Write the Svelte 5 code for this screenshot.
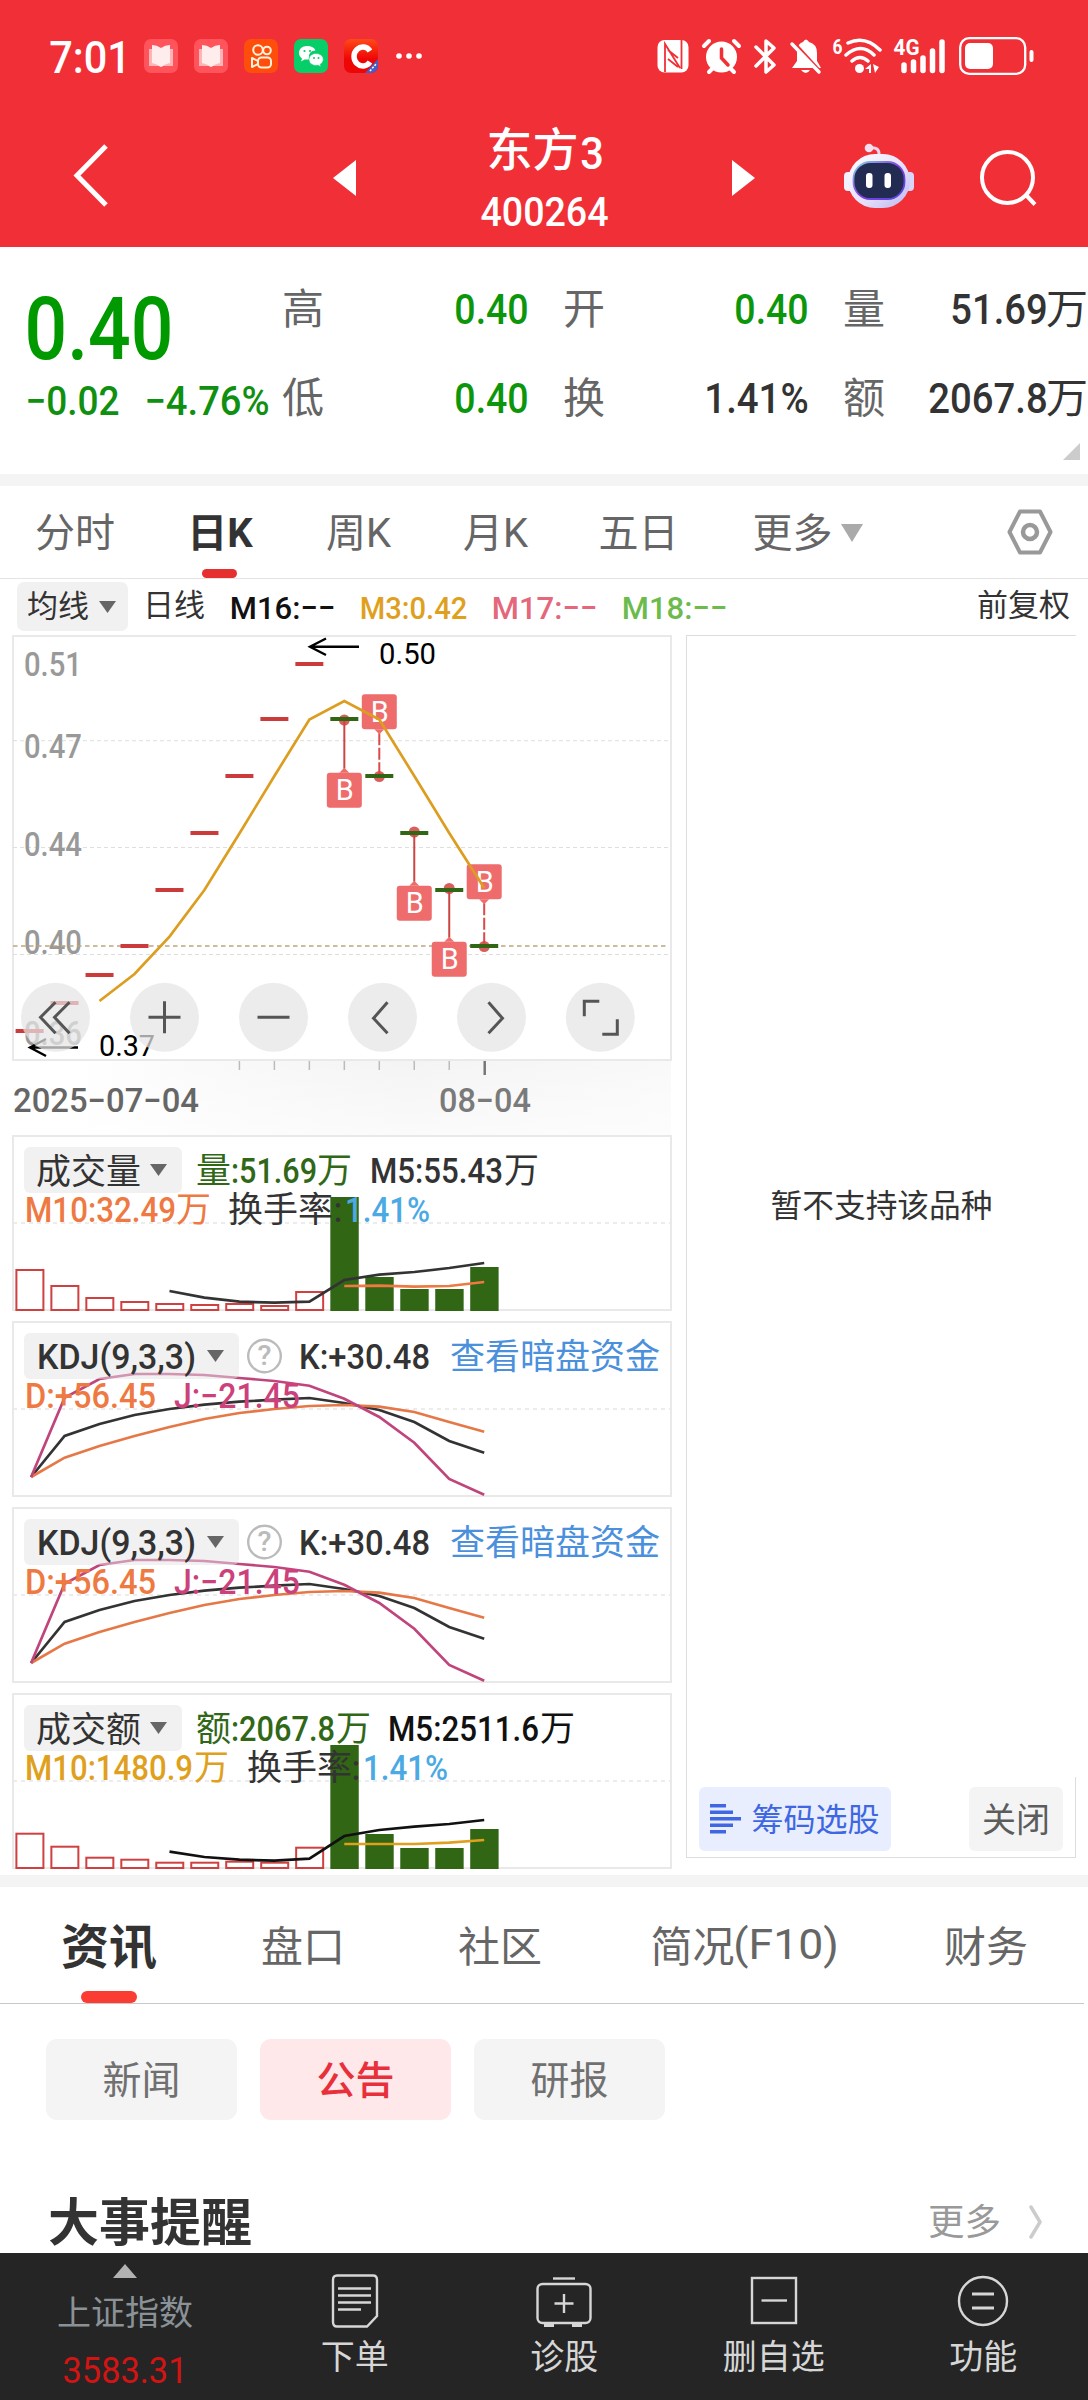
<script lang="ts">
	type Label = [x: number, y: number, text: string, width: number, color: string];

	const quotes = [
		[
			{ name: '高', value: '0.40', width: 71, down: true },
			{ name: '低', value: '0.40', width: 71, down: true }
		],
		[
			{ name: '开', value: '0.40', width: 71, down: true },
			{ name: '换', value: '1.41%', width: 101 }
		],
		[
			{ name: '量', value: '51.69', width: 94, unit: '万' },
			{ name: '额', value: '2067.8', width: 116, unit: '万' }
		]
	];

	const averages = [
		{ text: 'M16:--', width: 103, color: '#111' },
		{ text: 'M3:0.42', width: 105, color: '#dfa01e' },
		{ text: 'M17:--', width: 103, color: '#e4677b' },
		{ text: 'M18:--', width: 103, color: '#6cbb4c' }
	];

	// x of the n-th trading day
	const dayX = (i: number) => 29.6 + i * 34.97;
	const line = (ys: number[], from = 0) =>
		ys.map((y, i) => `${(dayX(i + from) + (i + from === 0 ? 1.5 : 0)).toFixed(1)},${y}`).join(' ');

	const prices = [1031, 1003, 975, 946, 890, 833, 776, 719, 664, 719, 776, 833, 890, 946];
	const ma3 = [1001, 974, 936.6, 890, 833.5, 776, 719.5, 701, 719.5, 776, 833, 888];

	const axis: [string, number][] = [
		['0.51', 676],
		['0.47', 757.6],
		['0.44', 855.7],
		['0.40', 954.3],
		['0.36', 1044.7]
	];

	// day, top of the badge, y of the price dot
	const marks = [
		{ day: 9, top: 772.7, dot: 720 },
		{ day: 10, top: 694.3, dot: 776.5 },
		{ day: 11, top: 885.7, dot: 832 },
		{ day: 12, top: 941.7, dot: 888.5 },
		{ day: 13, top: 864.3, dot: 946.5 }
	];

	const tools = [
		{ x: 55.5, d: 'M0 -15 L-15 0 L0 16 M14 -15 L-1 0 L14 16' },
		{ x: 164.5, d: 'M-16 0 H16 M0 -16 V16' },
		{ x: 273.5, d: 'M-16 0 H16' },
		{ x: 382.5, d: 'M5 -15 L-9 1 L5 16' },
		{ x: 491.5, d: 'M-3 -15 L11 1 L-3 16' },
		{ x: 600.3, d: 'M-16 -1 V-16 H-1 M17 2 V17 H2' }
	];

	const volume = {
		title: '成交量',
		bars: [135, 151, 163, 167, 169, 170, 169, 171, 157, 62, 142, 154, 154, 132],
		m5: [156, 162.7, 166.7, 167.7, 166.7, 145, 139.7, 137, 133, 128],
		m10: [151, 150.7, 151.7, 151, 147],
		m5Color: '#333',
		m10Color: '#ee7942',
		labels: [
			[196, 48, '量', 0, '#306818'],
			[232, 48, ':51.69', 84, '#306818'],
			[317, 48, '万', 0, '#306818'],
			[371, 48, 'M5:55.43', 131, '#333'],
			[504, 48, '万', 0, '#333'],
			[26, 86.7, 'M10:32.49', 149, '#ee7942'],
			[176, 86.7, '万', 0, '#ee7942'],
			[228, 86.7, '换手率', 0, '#333'],
			[335, 86.7, ':', 6, '#333'],
			[346, 86.7, '1.41%', 83, '#4ba9e4']
		] as Label[]
	};

	const turnover = {
		title: '成交额',
		bars: [140.7, 153.7, 164.7, 166.7, 169.7, 169.7, 168.7, 169.7, 154.7, 52, 141, 155, 155, 136],
		m5: [158.7, 164, 166.7, 167.7, 165.7, 143, 137, 133.7, 131, 127],
		m10: [151, 151, 151, 149.7, 147],
		m5Color: '#111',
		m10Color: '#dfa01e',
		labels: [
			[196, 48, '额', 0, '#306818'],
			[232, 48, ':2067.8', 102, '#306818'],
			[336, 48, '万', 0, '#306818'],
			[389, 48, 'M5:2511.6', 149, '#111'],
			[540, 48, '万', 0, '#111'],
			[26, 86.7, 'M10:1480.9', 166, '#dfa01e'],
			[194, 86.7, '万', 0, '#dfa01e'],
			[247, 86.7, '换手率', 0, '#333'],
			[353, 86.7, ':', 6, '#333'],
			[364, 86.7, '1.41%', 83, '#4ba9e4']
		] as Label[]
	};

	const kdj = {
		k: [156, 115, 103, 94, 88, 83.7, 80.7, 78.7, 77, 82, 89, 101, 120, 131.7],
		d: [156, 136.7, 125, 115, 106, 98, 92, 88, 85, 84, 85.7, 91, 101, 110.7],
		j: [156, 76.7, 58, 53, 53, 54, 57, 60, 64.7, 77.7, 96, 121.7, 158, 173.7]
	};
</script>

<!-- condensed figures; the box is centred on the cap height -->
{#snippet num(text: string, width: number, size: number, weight = 500)}
	<svg class="num" {width} height={size}>
		<text
			x={-size * 0.04}
			y={size * 0.86}
			font-size={size}
			font-weight={weight}
			textLength={width + size * 0.08}
			lengthAdjust="spacingAndGlyphs">{text}</text
		>
	</svg>
{/snippet}

{#snippet label(x: number, y: number, text: string, width: number, fill: string, size = 35, weight = 500)}
	{#if width}
		<text
			x={x - 1}
			{y}
			{fill}
			font-size={size}
			font-weight={weight}
			textLength={width + 2}
			lengthAdjust="spacingAndGlyphs">{text}</text
		>
	{:else}
		<text {x} {y} {fill} font-size={size}>{text}</text>
	{/if}
{/snippet}

{#snippet frame()}
	<rect x="13" y="1" width="658" height="174" fill="none" stroke="#e9e9e9" stroke-width="2" />
	<path d="M13 88 H671" stroke="#e6e6e6" stroke-width="1.5" stroke-dasharray="4 4" />
{/snippet}

{#snippet bars(panel: typeof volume)}
	<svg class="panel" viewBox="0 0 674 186">
		{@render frame()}
		{#each panel.bars as top, i}
			{#if i < 9}
				<rect x={dayX(i) - 13.2} y={top} width="27" height={175 - top} fill="#fff" stroke="#cf4040" stroke-width="2" />
			{:else}
				<rect x={dayX(i) - 14} y={top} width="28.4" height={176 - top} fill="#306614" />
			{/if}
		{/each}
		<polyline points={line(panel.m5, 4)} stroke={panel.m5Color} />
		<polyline points={line(panel.m10, 9)} stroke={panel.m10Color} />
		<rect class="select" x="24" y="12" width="158" height="46" rx="6" />
		{@render label(36, 49, panel.title, 0, '#333')}
		<path d="M150 29 H167 L158.5 41 Z" fill="#666" />
		{#each panel.labels as [x, y, text, width, color]}
			{@render label(x, y, text, width, color)}
		{/each}
	</svg>
{/snippet}

{#snippet kdjPanel()}
	<svg class="panel" viewBox="0 0 674 186">
		{@render frame()}
		<polyline points={line(kdj.k)} stroke="#333" />
		<polyline points={line(kdj.d)} stroke="#e57846" />
		<polyline points={line(kdj.j)} stroke="#c0457c" />
		<rect class="select" x="24" y="12" width="215" height="46" rx="6" />
		{@render label(38, 48, 'KDJ(9,3,3)', 157, '#333')}
		<path d="M207 29 H224 L215.5 41 Z" fill="#666" />
		<circle cx="264.5" cy="35" r="16.3" fill="none" stroke="#bbb" stroke-width="2.4" />
		{@render label(258.5, 44, '?', 12, '#bbb', 27)}
		{@render label(300, 48, 'K:+30.48', 129, '#333')}
		{@render label(450, 48, '查看暗盘资金', 0, '#4a90dc')}
		{@render label(26, 86.7, 'D:+56.45', 129, '#ee7942')}
		{@render label(175, 86.7, 'J:−21.45', 124, '#cc417c')}
	</svg>
{/snippet}

<div class="screen">
	<header>
		<div class="status">
			<span class="time">{@render num('7:01', 78, 45, 500)}</span>
			<div class="apps">
				{#each [0, 1] as _}
					<svg viewBox="0 0 34 34" class="book">
						<path d="M5 10 h24 v17 H19 l-2 1 -2-1 H5z" fill="#ffb4b6" />
						<path d="M8 6 q5 0 9 3 q4-3 9-3 v18 q-5 1-9 4 q-4-3-9-4z" fill="#ffecec" />
					</svg>
				{/each}
				<svg viewBox="0 0 34 34" style:background="#ff4d0c">
					<g fill="none" stroke="#fff2d8" stroke-width="2">
						<circle cx="14" cy="11" r="4.8" /><circle cx="23" cy="11.5" r="3.8" />
						<rect x="14" y="18.5" width="13" height="10" rx="3.5" />
						<path d="M14 22 l-6-3 v9 l6-3" stroke-linejoin="round" />
					</g>
				</svg>
				<svg viewBox="0 0 34 34" style:background="#07ce68">
					<path d="M13 7 c-5 0-8 3-8 7 c0 2 1 4 3 5.5 l-1 3 3.5-2 h5 c-2-6 2-9 6-9 c-1-3-4-4.5-8.5-4.5z" fill="#fff" />
					<path d="M22 14.5 c-4 0-7 2.5-7 6 s3 6 7 6 l2-.3 3 1.5-.7-2.5 c2-1 3-3 3-4.7 c0-3.5-3-6-7.3-6z" fill="#fff" stroke="#07ce68" stroke-width=".6" />
					<g fill="#07ce68"><circle cx="10.5" cy="12" r="1.1" /><circle cx="16" cy="12" r="1.1" /><circle cx="20" cy="19" r="1" /><circle cx="24.5" cy="19" r="1" /></g>
				</svg>
				<svg viewBox="0 0 34 34" class="cnews">
					<path d="M34 20 V34 H21z" fill="#4260c8" />
					<path d="M26 12 a8.8 9.5 0 1 0 0 11" fill="none" stroke="#fff" stroke-width="5.5" />
					<path d="M26 32 l6-7" stroke="#fff" stroke-width="1.5" stroke-dasharray="2 1.5" />
				</svg>
			</div>
			<svg class="dots" width="26" height="6" viewBox="0 0 26 6" fill="#fff">
				<circle cx="3" cy="3" r="2.8" /><circle cx="13" cy="3" r="2.8" /><circle cx="23" cy="3" r="2.8" />
			</svg>

			<svg class="system" width="377" height="40" viewBox="657 36 377 40" fill="#fff">
				<rect x="657.5" y="40" width="31" height="32.5" rx="7" />
				<path d="M665 72 V44 L680 68 M681.5 40 V69 M668 50 L678 58 M668 59 L678 67" fill="none" stroke="#f12f37" stroke-width="1.8" />

				<circle cx="721.5" cy="57" r="15.5" />
				<path d="M704 46 l5-5 M734 41 l5 5 M709 72 l4-4 M734 72 l-4-4" stroke="#fff" stroke-width="4" stroke-linecap="round" />
				<path d="M721.5 49 V58 L728 65" fill="none" stroke="#f12f37" stroke-width="3.5" stroke-linecap="round" />

				<path d="M756 47 L774 65 L766 72 V41 L774 48 L756 66" fill="none" stroke="#fff" stroke-width="3.5" stroke-linejoin="round" stroke-linecap="round" />

				<path d="M792 68 l5-7 v-10 q1-8 6-9 q3-5 6 0 q8 2 8 11 v8 l4 7z" />
				<path d="M791 40 L823 75" stroke="#f12f37" stroke-width="4" />
				<path d="M792 44 L819 72" stroke="#fff" stroke-width="3.5" stroke-linecap="round" />
				<path d="M801 70 h9 q-4 6-9 0z" />

				<text x="832.5" y="53.5" font-size="21" font-weight="700" textLength="10" lengthAdjust="spacingAndGlyphs">6</text>
				<g fill="none" stroke="#fff" stroke-width="3.5" stroke-linecap="round">
					<path d="M848 43 Q865 35 880 50 M846 55 Q861 42 874 55 M852 61 Q860 54 868 61" />
				</g>
				<circle cx="859.5" cy="68.5" r="4.5" />
				<path d="M865 69 l6-5 v9 h-2 v-4z M873 64 l6 3 -4 6z" />

				<text x="893.5" y="55" font-size="22" font-weight="700" textLength="26" lengthAdjust="spacingAndGlyphs">4G</text>
				<g stroke="#fff" stroke-width="5.5" stroke-linecap="round">
					<path d="M904 65 V70.5 M913.5 62 V70.5 M923 58 V70.5 M932.5 51 V70.5 M942 42 V70.5" />
				</g>

				<rect x="960.2" y="38.2" width="65" height="35.6" rx="9" fill="none" stroke="#fff" stroke-width="2.3" />
				<rect x="965" y="43" width="28" height="26" rx="5" />
				<rect x="1029.5" y="50" width="4" height="12" rx="2" />
			</svg>
		</div>

		<div class="nav">
			<svg width="36" height="64" viewBox="0 0 36 64"><path d="M33 2 L4 31.5 L33 61" fill="none" stroke="#fff" stroke-width="5" /></svg>
			<svg class="prev" width="23" height="36" viewBox="0 0 23 36"><path d="M0 18 L23 0 V36z" fill="#fff" /></svg>
			<div class="name">
				<h1>东方<span>{@render num('3', 20, 45)}</span></h1>
				{@render num('400264', 125, 40)}
			</div>
			<svg class="next" width="23" height="36" viewBox="0 0 23 36"><path d="M23 18 L0 0 V36z" fill="#fff" /></svg>
			<svg class="robot" width="70" height="66" viewBox="0 0 70 66">
				<defs>
					<linearGradient id="shell" x1="0" y1="0" x2="1" y2="1">
						<stop offset="0" stop-color="#fff" /><stop offset=".6" stop-color="#e3defa" /><stop offset="1" stop-color="#b9b4ee" />
					</linearGradient>
					<linearGradient id="rim" x1="0" y1="0" x2="1" y2="1">
						<stop offset="0" stop-color="#7fd6e4" /><stop offset=".5" stop-color="#8a3be0" /><stop offset="1" stop-color="#4d4ae0" />
					</linearGradient>
				</defs>
				<path d="M25 5 Q36 3 35 13" fill="none" stroke="#e8d6ee" stroke-width="3" />
				<circle cx="25" cy="5" r="4.3" fill="#f3dfef" />
				<rect x="0" y="29" width="9" height="19" rx="4" fill="#f4f1ff" /><rect x="61" y="29" width="9" height="19" rx="4" fill="#d8d4fa" />
				<rect x="4" y="11" width="62" height="54" rx="27" fill="url(#shell)" />
				<rect x="9.5" y="19" width="51" height="37" rx="17" fill="#222b52" stroke="url(#rim)" stroke-width="1.8" />
				<rect x="22" y="30" width="6.5" height="15" rx="3" fill="#fff" /><rect x="40.5" y="30" width="6.5" height="15" rx="3" fill="#fff" />
			</svg>
			<svg class="search" width="58" height="58" viewBox="0 0 58 58" fill="none" stroke="#fff" stroke-width="4">
				<circle cx="28.5" cy="28.5" r="25.5" /><path d="M47 46 L56 55.5" />
			</svg>
		</div>
	</header>

	<section class="quote">
		<div class="price">
			{@render num('0.40', 142, 87, 500)}
			<div class="change">
				{@render num('−0.02', 91, 40)}
				{@render num('−4.76%', 122, 40)}
			</div>
		</div>
		{#each quotes as column}
			<dl>
				{#each column as item}
					<dt>{item.name}</dt>
					<dd class:down={item.down}>
						{@render num(item.value, item.width, 42)}{#if item.unit}<span>{item.unit}</span>{/if}
					</dd>
				{/each}
			</dl>
		{/each}
		<i class="corner"></i>
	</section>

	<nav class="periods">
		<span>分时</span>
		<span class="active">日K</span>
		<span>周K</span>
		<span>月K</span>
		<span>五日</span>
		<span>更多<svg width="22" height="18" viewBox="0 0 22 18"><path d="M0 0 H22 L11 18z" fill="#aaa" /></svg></span>
		<svg class="gear" width="46" height="46" viewBox="0 0 46 46" fill="none" stroke="#999">
			<path d="M13 2.5 H33 L43.5 23 L33 43.5 H13 L2.5 23z" stroke-width="4" stroke-linejoin="round" />
			<circle cx="23" cy="23" r="7" stroke-width="4.5" />
		</svg>
	</nav>

	<div class="averages">
		<span class="pick">均线<svg width="17" height="12" viewBox="0 0 17 12"><path d="M0 0 H17 L8.5 12z" fill="#666" /></svg></span>
		<span class="kind">日线</span>
		{#each averages as item}
			<span class="avg" style:color={item.color}>{@render num(item.text.replace('--', '−−'), item.width, 32)}</span>
		{/each}
		<span class="adjust">前复权</span>
	</div>

	<main>
		<div class="charts">
			<svg class="kline" viewBox="0 635 674 500">
				<defs>
					<linearGradient id="shade">
						<stop offset=".1" stop-color="#f0f0f0" stop-opacity="0" />
						<stop offset=".6" stop-color="#f4f4f4" />
						<stop offset="1" stop-color="#f9f9f9" />
					</linearGradient>
					<linearGradient id="fade" x2="0" y2="1">
						<stop offset="0" stop-color="#fff" stop-opacity="0" />
						<stop offset="1" stop-color="#fff" stop-opacity=".6" />
					</linearGradient>
				</defs>
				<rect x="13" y="1061" width="658" height="74" fill="url(#shade)" />
				<rect x="13" y="1061" width="658" height="74" fill="url(#fade)" />
				<rect x="13" y="636" width="658" height="424" fill="#fff" stroke="#e9e9e9" stroke-width="2" />
				<path d="M13 740.7 H671 M13 847.5 H671 M13 954.5 H671" stroke="#dedede" stroke-dasharray="4 3" />
				{#each axis as [text, y]}
					{@render label(25, y, text, 56, '#999', 34)}
				{/each}
				<path d="M13 946 H667" stroke="#bba77c" stroke-width="1.6" stroke-dasharray="4.5 3.5" />

				{#each prices as y, i}
					{#if i < 9}
						<path d="M{dayX(i) - 14} {y} h28" stroke="#cc3b3b" stroke-width="4" />
					{/if}
				{/each}

				{#each marks as mark}
					{@const x = dayX(mark.day)}
					{@const below = mark.top > mark.dot}
					<circle cx={x} cy={mark.dot} r="5.5" fill="#d95f5c" />
					{#if below}
						<path d="M{x} {mark.dot} V{mark.top - 4}" stroke="#cc4545" stroke-width="2" />
						<path d="M{x - 5} {mark.top} l5 -5 l5 5z" fill="#ee6c6c" />
					{:else}
						<path d="M{x} {mark.top + 39} V{mark.dot}" stroke="#d94a4a" stroke-width="2" stroke-dasharray="12 2.5" />
						<path d="M{x - 5} {mark.top + 35} l5 5 l5 -5z" fill="#ee6c6c" />
					{/if}
					<path d="M{x - 14} {prices[mark.day]} h28" stroke="#306614" stroke-width="4" />
					<rect x={x - 17.5} y={mark.top} width="35" height="35" rx="3" fill="#ee6c6c" />
					{@render label(x - 7.5, mark.top + 27.5, 'B', 16, '#fff', 29, 400)}
				{/each}

				<polyline points={line(ma3, 2)} stroke="#dc9d20" />

				<g fill="none" stroke="#000" stroke-width="2.4">
					<path d="M359 646.7 H310 M326 638.5 L310 646.7 L326 655" />
					<path d="M78 1047.5 H30 M46 1039 L30 1047.5 L46 1056" />
				</g>
				{@render label(380, 663.7, '0.50', 55, '#000', 30, 400)}
				{@render label(100, 1055.7, '0.37', 54, '#000', 30, 400)}

				{#each tools as tool}
					<g transform="translate({tool.x} 1017.3)">
						<circle r="34.5" fill="#e4e4e4" fill-opacity=".72" />
						<path d={tool.d} fill="none" stroke="#555" stroke-width="3" />
					</g>
				{/each}

				{#each [6, 7, 8, 9, 10, 11, 12] as i}
					<path d="M{dayX(i)} 1061 v9" stroke="#bbb" stroke-width="1.5" />
				{/each}
				<path d="M{dayX(13) + 0.5} 1061 v14" stroke="#777" stroke-width="2.5" />
				{@render label(14, 1111.7, '2025−07−04', 184, '#666', 33)}
				{@render label(440, 1111.7, '08−04', 90, '#7a7a7a', 33)}
			</svg>
			{@render bars(volume)}
			{@render kdjPanel()}
			{@render kdjPanel()}
			{@render bars(turnover)}
		</div>

		<aside>
			<p>暂不支持该品种</p>
			<div class="actions">
				<button class="chips">
					<svg width="31" height="32" viewBox="0 0 31 32" fill="#3f67e2">
						<rect y="1" width="16" height="3.5" /><rect y="7.5" width="23" height="3.5" /><rect y="14" width="31" height="3.5" /><rect y="20.5" width="23" height="3.5" /><rect y="27" width="16" height="3.5" />
					</svg><span>筹码选股</span>
				</button>
				<button class="close"><span>关闭</span></button>
			</div>
		</aside>
	</main>

	<nav class="sections">
		<span class="active">资讯</span>
		<span>盘口</span>
		<span>社区</span>
		<span>简况{@render num('(F10)', 102, 43, 400)}</span>
		<span>财务</span>
	</nav>

	<div class="filters">
		<span>新闻</span>
		<span class="active">公告</span>
		<span>研报</span>
	</div>

	<section class="events">
		<h2>大事提醒</h2>
		<span>更多</span>
		<svg width="15" height="34" viewBox="0 0 15 34"><path d="M3 2 L12 17 L3 32" fill="none" stroke="#ccc" stroke-width="3.5" stroke-linecap="round" stroke-linejoin="round" /></svg>
	</section>

	<footer>
		<div class="index">
			<svg width="24" height="14" viewBox="0 0 24 14"><path d="M12 0 L24 14 H0z" fill="#b2b2b2" /></svg>
			<span>上证指数</span>
			<strong>{@render num('3583.31', 122, 37, 400)}</strong>
		</div>
		<div>
			<svg viewBox="0 0 58 56">
				<path d="M11 2.5 H47 Q51 2.5 51 7 V43 L41 53.5 H11 Q7 53.5 7 49 V7 Q7 2.5 11 2.5z" />
				<path d="M12 15.5 H45 M12 22.5 H45 M12 29.5 H45 M12 36.5 H35" stroke-width="2.7" />
			</svg>
			<span>下单</span>
		</div>
		<div>
			<svg viewBox="0 0 58 56">
				<path d="M18 5.5 H40" /><rect x="2.5" y="11" width="53" height="39" rx="5" />
				<path d="M29 21 V40 M19.5 30.5 H38.5" /><path d="M9 52.5 H19 M37 52.5 H47" stroke-width="3" />
			</svg>
			<span>诊股</span>
		</div>
		<div>
			<svg viewBox="0 0 58 56"><rect x="7" y="5" width="44" height="45" /><path d="M16.5 27.5 H42" /></svg>
			<span>删自选</span>
		</div>
		<div>
			<svg viewBox="0 0 58 56"><circle cx="29" cy="28" r="24" /><path d="M18 21 H40 M18 35 H40" stroke-width="2.8" /></svg>
			<span>功能</span>
		</div>
	</footer>
</div>

<style>
	:global(body) {
		background: #fff;
	}

	.screen {
		width: 1088px;
		height: 2400px;
		overflow: hidden;
		display: flex;
		flex-direction: column;
		font-family: Roboto, 'Noto Sans CJK SC', sans-serif;
		color: #333;
	}

	svg {
		flex: none;
		display: block;
	}

	svg text {
		font-family: Roboto, 'Noto Sans CJK SC', sans-serif;
	}

	.num {
		overflow: visible;
		fill: currentColor;
	}

	header {
		height: 247px;
		flex: none;
		background: #f12f37;
		color: #fff;
	}

	.status {
		display: flex;
		align-items: center;
		height: 112px;
		padding-left: 51px;
	}

	.apps {
		display: flex;
		gap: 16px;
		margin-left: 15px;
	}

	.apps svg {
		width: 34px;
		height: 34px;
		border-radius: 7px;
	}

	.apps .book {
		background: #ff545c;
	}

	.apps .cnews {
		background: linear-gradient(#ff4a18, #ee0505 60%);
	}

	.dots {
		margin-left: 18px;
	}

	.system {
		margin-left: 235px;
	}

	.nav {
		display: flex;
		align-items: center;
		height: 127px;
		padding-left: 73px;
	}

	.prev {
		margin: 4px 0 0 224px;
	}

	.name {
		width: 376px;
		display: flex;
		flex-direction: column;
		align-items: center;
	}

	.name h1 {
		display: flex;
		align-items: center;
		height: 54px;
		margin: 3px 0 15px;
		font-size: 46px;
		font-weight: 500;
		line-height: 54px;
	}

	.name h1 span {
		margin: 6px 0 0 3px;
	}

	.next {
		margin-top: 4px;
	}

	.robot {
		margin-left: 89px;
	}

	.search {
		margin: 4px 0 0 65px;
	}

	.quote {
		position: relative;
		display: grid;
		grid-template-columns: 280px 281px 280px 247px;
		height: 227px;
		flex: none;
		border-bottom: 12px solid #f4f4f4;
	}

	.price {
		padding: 37px 0 0 28px;
		color: #009a00;
	}

	.change {
		display: flex;
		gap: 28px;
		margin: 10px 0 0 -1px;
		color: #109010;
	}

	dl {
		display: grid;
		grid-template-columns: 60px 1fr;
		grid-template-rows: 89px 89px;
		margin: 17px 34px 0 2px;
		align-items: center;
	}

	dl:last-of-type {
		margin-right: 0;
	}

	dt {
		padding-bottom: 6px;
		font-size: 42px;
		color: #666;
	}

	dd {
		display: flex;
		justify-content: flex-end;
		align-items: center;
		margin: 0;
		font-size: 42px;
	}

	dd span {
		padding-bottom: 6px;
	}

	.down {
		color: #0b960b;
	}

	.corner {
		position: absolute;
		right: 8px;
		bottom: 14px;
		border-left: 17px solid transparent;
		border-bottom: 17px solid #ccc;
	}

	.periods {
		display: grid;
		grid-template-columns: 150px 140px 137px 137px 149px 189px 1fr;
		align-items: center;
		height: 92px;
		flex: none;
		border-bottom: 1px solid #e4e4e4;
		font-size: 40px;
		color: #666;
		text-align: center;
	}

	.periods span {
		height: 92px;
		line-height: 96px;
	}

	.periods .active {
		position: relative;
		font-weight: 700;
		color: #333;
	}

	.periods .active::after {
		content: '';
		position: absolute;
		left: 52px;
		bottom: 0;
		width: 35px;
		height: 9px;
		border-radius: 5px;
		background: #e63030;
	}

	.periods span svg {
		display: inline-block;
		margin-left: 8px;
		vertical-align: 5px;
	}

	.gear {
		margin-left: 105px;
	}

	.averages {
		display: flex;
		align-items: center;
		box-sizing: border-box;
		height: 56px;
		flex: none;
		padding: 0 18px 1px 17px;
		font-size: 31px;
		line-height: 40px;
	}

	.pick {
		display: flex;
		align-items: center;
		gap: 10px;
		width: 101px;
		height: 49px;
		padding-left: 10px;
		border-radius: 7px;
		background: #f1f1f1;
		line-height: 46px;
	}

	.kind {
		margin: 0 -1px 2px 15px;
	}

	.avg {
		margin-left: 27px;
	}

	.adjust {
		margin: 0 0 2px auto;
	}

	main {
		display: flex;
		height: 1240px;
		flex: none;
		border-bottom: 12px solid #f4f4f4;
	}

	.charts {
		width: 674px;
	}

	.kline {
		width: 674px;
		height: 500px;
	}

	.panel {
		width: 674px;
		height: 186px;
	}

	polyline {
		fill: none;
		stroke-width: 2.7;
	}

	.select {
		fill: #e3e3e3;
		fill-opacity: 0.5;
	}

	aside {
		display: flex;
		flex-direction: column;
		width: 389px;
		height: 1221px;
		margin-left: 12px;
		border: solid #ddd;
		border-width: 1px 0 1px 1px;
	}

	aside p {
		flex: 1;
		margin: 0;
		text-align: center;
		font-size: 31.7px;
		line-height: 1141px;
	}

	.actions {
		display: flex;
		justify-content: space-between;
		height: 70px;
		padding: 10px 12px 0;
		border-right: 1px solid #ddd;
	}

	button {
		display: flex;
		align-items: center;
		justify-content: center;
		height: 64px;
		padding: 0;
		border: 0;
		border-radius: 6px;
		font: 32px 'Noto Sans CJK SC', sans-serif;
	}

	button span {
		padding-bottom: 4px;
	}

	.chips {
		gap: 10px;
		width: 192px;
		background: #e8eefe;
		color: #3f67e2;
	}

	.close {
		width: 94px;
		background: #f4f4f4;
		color: #5c5c5c;
		font-size: 34px;
	}

	.sections {
		display: grid;
		grid-template-columns: 218px 170px 224px 263px 1fr;
		height: 116px;
		width: 1084px;
		flex: none;
		border-bottom: 1px solid #c8c8c8;
		font-size: 42px;
		color: #666;
	}

	.sections span {
		display: flex;
		align-items: center;
		justify-content: center;
		padding-bottom: 4px;
	}

	.sections span:last-child {
		padding-left: 13px;
	}

	.sections .active {
		position: relative;
		font-size: 48px;
		font-weight: 700;
		color: #333;
	}

	.sections .active::after {
		content: '';
		position: absolute;
		left: 81px;
		bottom: 0;
		width: 56px;
		height: 12px;
		border-radius: 6px;
		background: #fa3c32;
	}

	.filters {
		display: flex;
		gap: 23px;
		padding: 35px 46px 0;
	}

	.filters span {
		width: 191px;
		height: 81px;
		border-radius: 11px;
		background: #f4f4f4;
		color: #707070;
		font-size: 39px;
		line-height: 84px;
		text-align: center;
	}

	.filters .active {
		background: #ffe8e9;
		color: #e8303c;
		font-weight: 500;
	}

	.events {
		display: flex;
		align-items: center;
		height: 62px;
		margin-top: 71px;
		padding: 0 45px 0 48px;
		font-size: 36.5px;
		color: #999;
	}

	h2 {
		margin: 0 auto 0 0;
		padding-bottom: 6px;
		font-size: 51px;
		color: #333;
	}

	.events span {
		padding-bottom: 5px;
	}

	.events svg {
		margin-left: 27px;
	}

	footer {
		display: grid;
		grid-template-columns: 250px repeat(4, 209.5px);
		height: 147px;
		flex: none;
		background: #252525;
		color: #d6d6d6;
		font-size: 34px;
		line-height: 44px;
		text-align: center;
	}

	footer div {
		display: flex;
		flex-direction: column;
		align-items: center;
		padding-top: 20px;
	}

	footer div > svg {
		width: 58px;
		height: 56px;
		margin-bottom: 6px;
		fill: none;
		stroke: #d6d6d6;
		stroke-width: 2.4;
	}

	footer .index {
		padding-top: 11px;
		color: #8a9298;
	}

	.index > svg {
		width: 24px;
		height: 14px;
		margin-bottom: 13px;
		stroke: none;
	}

	.index strong {
		margin-top: 16px;
		color: #d31414;
	}
</style>
